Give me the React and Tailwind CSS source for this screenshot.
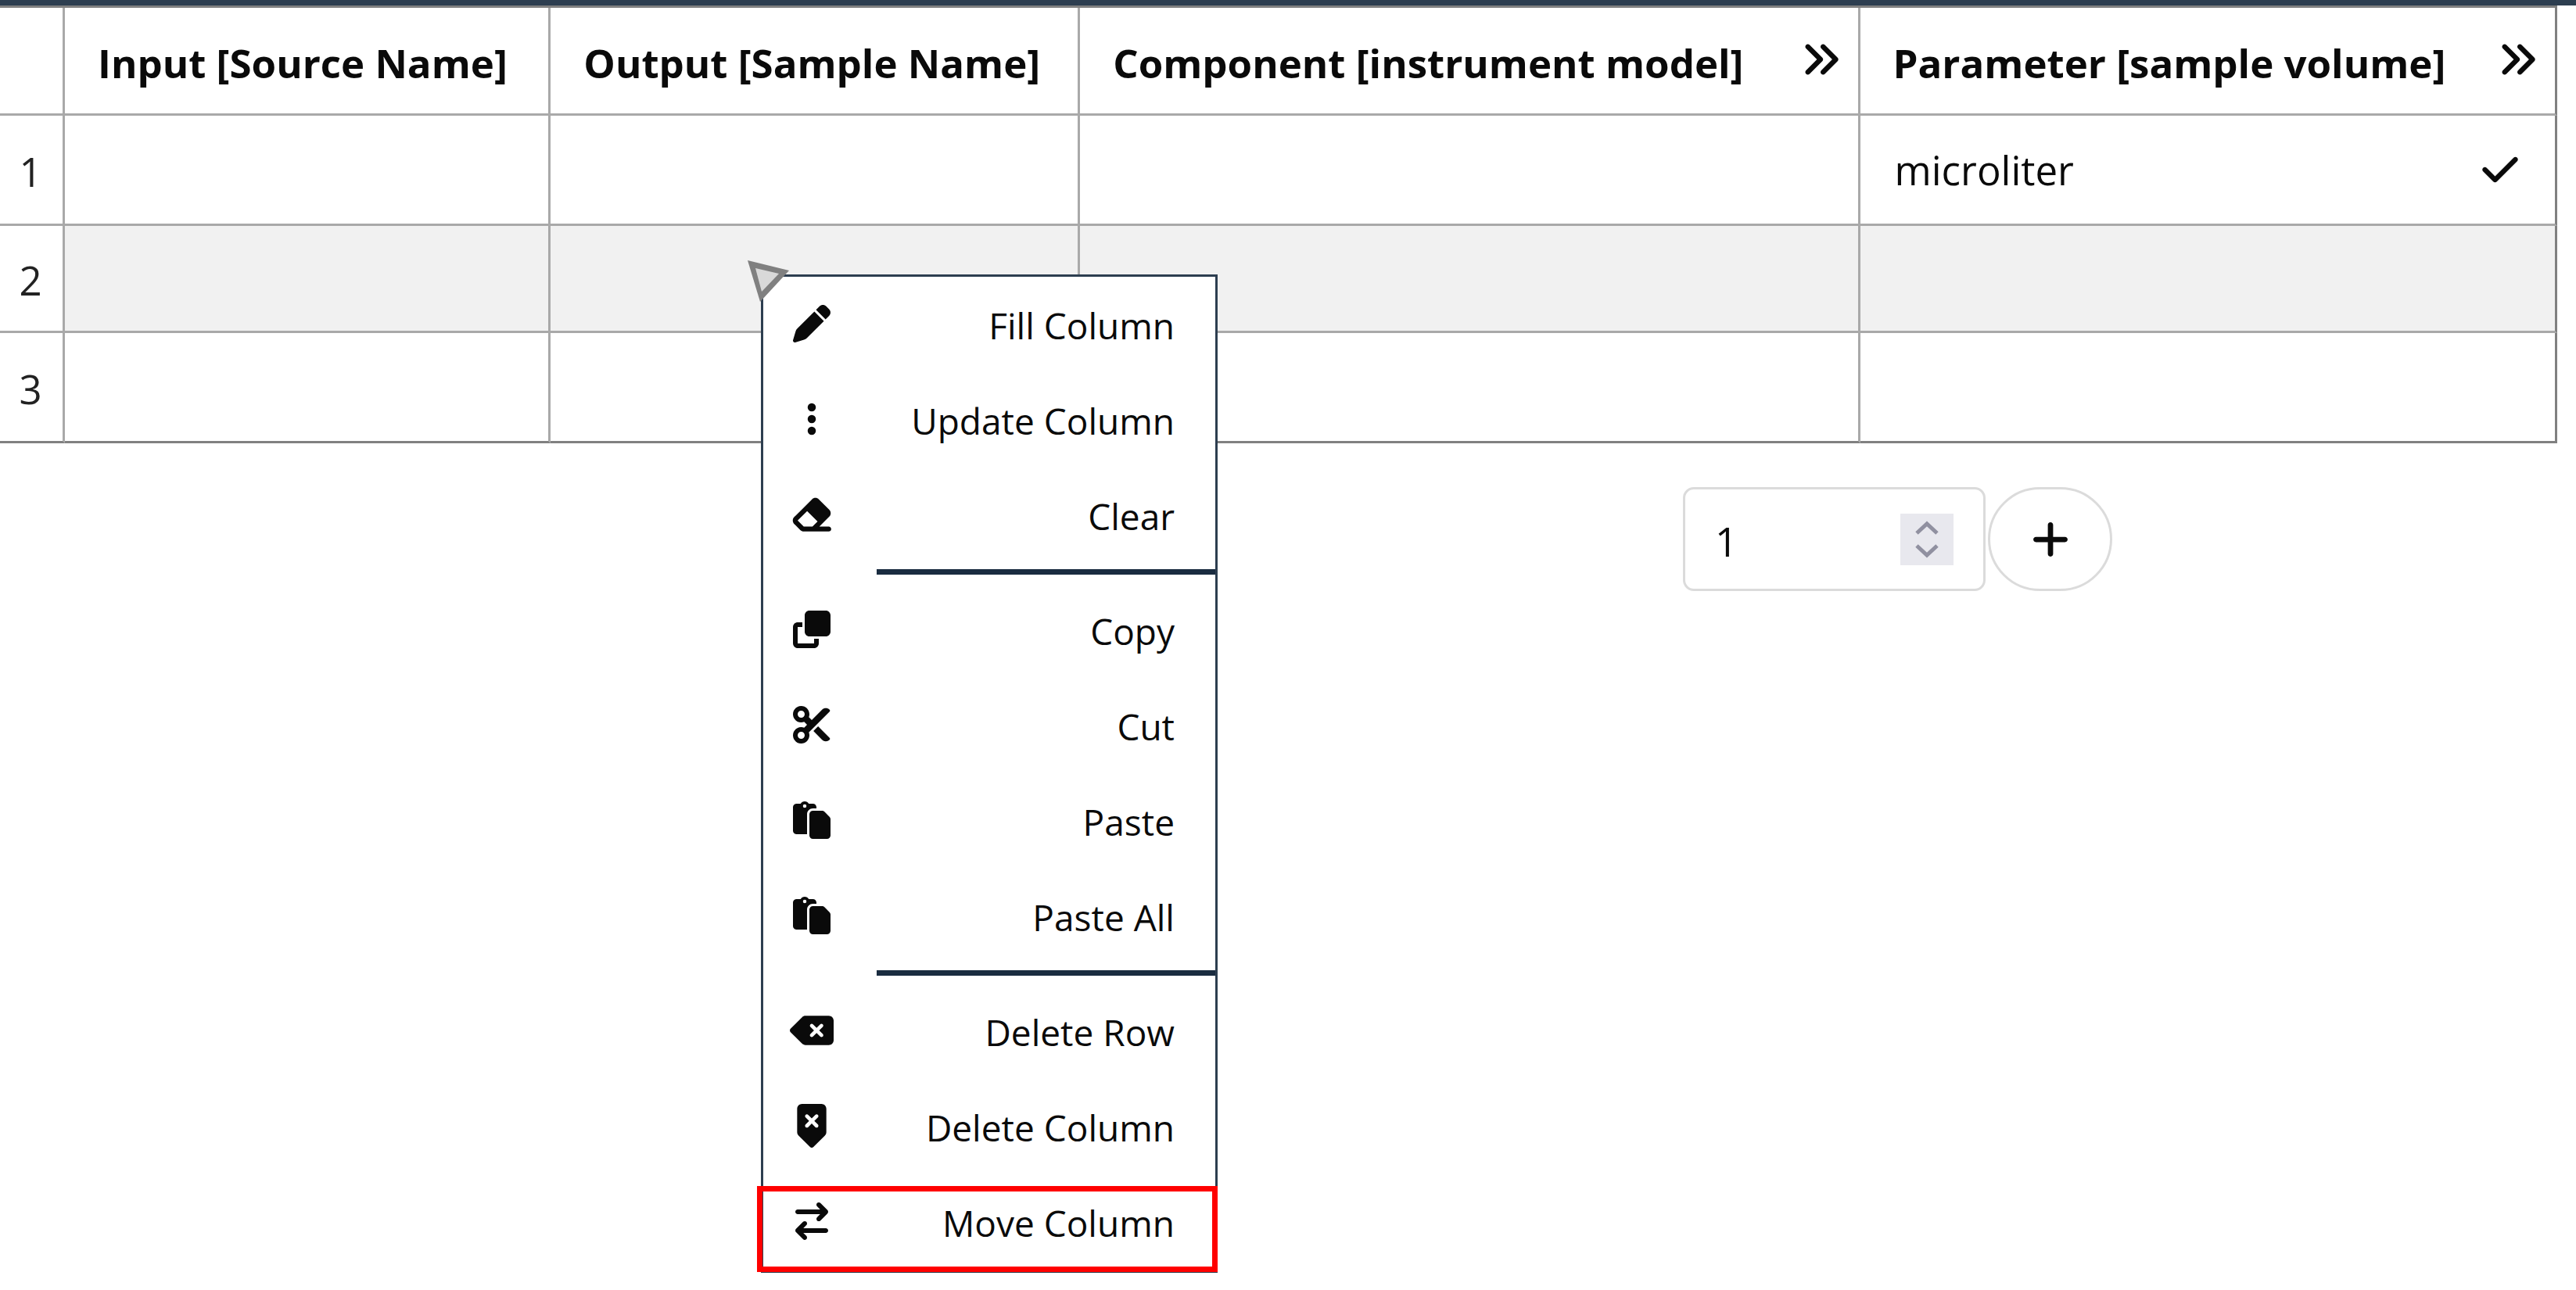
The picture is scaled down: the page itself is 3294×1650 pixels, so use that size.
import React, { useState } from "react";
import {
  FaPen,
  FaEllipsisVertical,
  FaEraser,
  FaClone,
  FaScissors,
  FaPaste,
  FaDeleteLeft,
  FaArrowRightArrowLeft,
  FaAnglesRight,
  FaCheck,
  FaPlus,
} from "react-icons/fa6";

const columns = [
  { title: "Input [Source Name]", width: "w-[19%]" },
  { title: "Output [Sample Name]", width: "w-[20.7%]" },
  { title: "Component [instrument model]", width: "w-[30.5%]", expandable: true },
  { title: "Parameter [sample volume]", width: "", expandable: true },
];

const rows = [
  { id: 1, height: "h-[141px]", cells: ["", "", "", "microliter"] },
  { id: 2, height: "h-[137px]", cells: ["", "", "", ""], active: true },
  { id: 3, height: "h-[141px]", cells: ["", "", "", ""] },
];

const square = "size-12 shrink-0";
const wide = "h-[50px] w-14 shrink-0";

const menuGroups = [
  [
    { label: "Fill Column", Icon: FaPen, iconClass: square },
    { label: "Update Column", Icon: FaEllipsisVertical, iconClass: square },
    { label: "Clear", Icon: FaEraser, iconClass: wide },
  ],
  [
    { label: "Copy", Icon: FaClone, iconClass: square },
    { label: "Cut", Icon: FaScissors, iconClass: square },
    { label: "Paste", Icon: FaPaste, iconClass: square },
    { label: "Paste All", Icon: FaPaste, iconClass: square },
  ],
  [
    { label: "Delete Row", Icon: FaDeleteLeft, iconClass: wide },
    { label: "Delete Column", Icon: FaDeleteLeft, iconClass: wide + " -rotate-90" },
    { label: "Move Column", Icon: FaArrowRightArrowLeft, iconClass: square, marked: true },
  ],
];

function AnnotationTable() {
  return (
    <table className="w-full table-fixed border-separate border-spacing-0 border-t-3 border-[#808080] text-[51px] leading-[70px]">
      <colgroup>
        <col className="w-[83px]" />
        {columns.map((c) => (
          <col key={c.title} className={c.width} />
        ))}
      </colgroup>
      <thead>
        <tr className="h-[138px]">
          <td className="border-r-3 border-b-3 border-[#a9a9a9]" />
          {columns.map((c) => (
            <th
              key={c.title}
              scope="col"
              className="border-r-3 border-b-3 border-[#a9a9a9] p-0 pt-1 pr-[22px] pl-[42px] text-left font-bold whitespace-nowrap last:border-r-[#808080]"
            >
              <div className="flex items-center justify-between">
                <span>{c.title}</span>
                {c.expandable && (
                  <button type="button" aria-label={"Expand " + c.title} className="mb-2">
                    <FaAnglesRight className="size-[52px]" />
                  </button>
                )}
              </div>
            </th>
          ))}
        </tr>
      </thead>
      <tbody>
        {rows.map((r, i) => {
          const bottom = i === rows.length - 1 ? "border-b-[#808080]" : "border-b-[#a9a9a9]";
          return (
            <tr key={r.id} className={r.height}>
              <th
                scope="row"
                className={"border-r-3 border-b-3 border-r-[#a9a9a9] p-0 pt-1 pr-0.5 text-center font-normal text-[#222222] " + bottom}
              >
                {r.id}
              </th>
              {r.cells.map((text, j) => (
                <td
                  key={j}
                  className={
                    "border-r-3 border-b-3 border-r-[#a9a9a9] py-0 pr-11 pl-11 last:border-r-[#808080] " +
                    bottom +
                    (r.active ? " bg-[#f1f1f1]" : "")
                  }
                >
                  {text && (
                    <div className="flex items-center justify-between">
                      <span>{text}</span>
                      <FaCheck className="size-[52px]" />
                    </div>
                  )}
                </td>
              ))}
            </tr>
          );
        })}
      </tbody>
    </table>
  );
}

function MenuItem({ label, Icon, iconClass, marked }) {
  return (
    <li role="none" className="relative">
      <button
        type="button"
        role="menuitem"
        className="flex h-[122px] w-full items-center justify-between pr-[52px] pl-[34px] whitespace-nowrap"
      >
        <span className="mb-1 flex w-14 justify-center">
          <Icon className={iconClass} />
        </span>
        <span>{label}</span>
      </button>
      {marked && (
        <span className="pointer-events-none absolute top-3.5 -right-[3px] -bottom-0.5 -left-2 border-[7px] border-[#ff0000]" />
      )}
    </li>
  );
}

function ContextMenu() {
  return (
    <div className="absolute top-[351px] left-[973px] w-[584px] border-3 border-[#2d3e50] bg-white pt-px text-[46px] leading-[64px]">
      <svg
        className="absolute -top-[22px] -left-[22px] h-[60px] w-[60px]"
        viewBox="0 0 60 60"
        aria-hidden="true"
      >
        <path d="M2 1 L55 14 L18 54 Z" fill="#808080" />
        <path d="M12 11 L42 18 L20 41 Z" fill="#d9d9d9" />
      </svg>
      <div role="menu" aria-label="Column actions">
        {menuGroups.map((group, g) => (
          <React.Fragment key={g}>
            {g > 0 && <hr className="mt-[7px] mb-[11px] ml-[145px] h-[7px] border-0 bg-[#1a2c40]" />}
            <ul role="none">
              {group.map((item) => (
                <MenuItem key={item.label} {...item} />
              ))}
            </ul>
          </React.Fragment>
        ))}
      </div>
    </div>
  );
}

function AddRows() {
  const [count, setCount] = useState(1);
  return (
    <div className="mt-14 flex justify-end gap-[3px] pr-[18%] text-[51px] leading-[70px]">
      <div className="flex h-[133px] w-[387px] items-center justify-between rounded-[14px] border-3 border-[#dbdbdb] pr-[38px] pl-[38px]">
        <input
          type="number"
          aria-label="Number of rows to add"
          value={count}
          min={1}
          onChange={(e) => setCount(Number(e.target.value))}
          className="w-40 [appearance:textfield] bg-transparent pt-1 outline-none [&::-webkit-inner-spin-button]:appearance-none"
        />
        <span className="flex h-[66px] w-[68px] flex-col items-center justify-center gap-3 bg-[#e8e8ee] text-[#9090a0]">
          <button type="button" aria-label="Increase" onClick={() => setCount(count + 1)}>
            <svg className="block h-[18px] w-[30px]" viewBox="0 0 30 18" fill="none" stroke="currentColor" strokeWidth="5">
              <path d="M2 16 L15 4 L28 16" />
            </svg>
          </button>
          <button type="button" aria-label="Decrease" onClick={() => setCount(Math.max(1, count - 1))}>
            <svg className="block h-[18px] w-[30px]" viewBox="0 0 30 18" fill="none" stroke="currentColor" strokeWidth="5">
              <path d="M2 2 L15 14 L28 2" />
            </svg>
          </button>
        </span>
      </div>
      <button
        type="button"
        aria-label="Add rows"
        className="flex h-[133px] w-[159px] items-center justify-center rounded-full border-3 border-[#dbdbdb]"
      >
        <FaPlus className="size-[54px]" />
      </button>
    </div>
  );
}

export default function App() {
  return (
    <main className="relative min-h-screen overflow-hidden bg-white font-['Open_Sans','Noto_Sans',sans-serif] text-[#0a0a0a]">
      <div className="h-[7px] bg-[#2d3e50]" />
      <div className="pr-6">
        <AnnotationTable />
      </div>
      <AddRows />
      <ContextMenu />
    </main>
  );
}
